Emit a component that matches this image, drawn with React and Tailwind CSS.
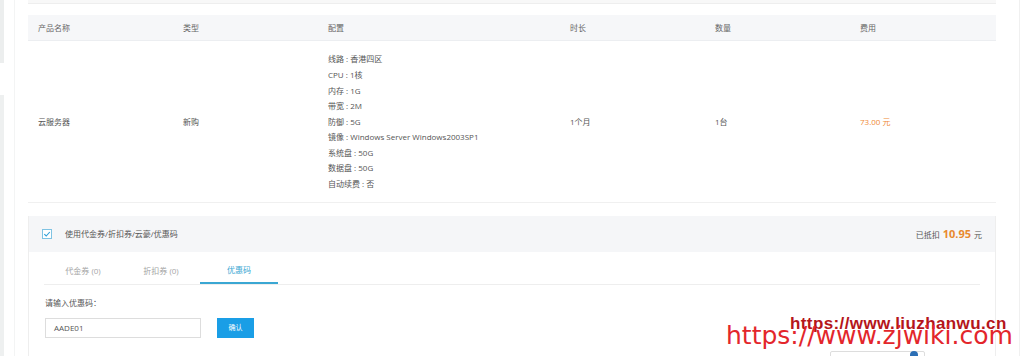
const configLines = [
  "线路 : 香港四区",
  "CPU : 1核",
  "内存 : 1G",
  "带宽 : 2M",
  "防御 : 5G",
  "镜像 : Windows Server Windows2003SP1",
  "系统盘 : 50G",
  "数据盘 : 50G",
  "自动续费 : 否",
];

const cols = "grid grid-cols-[145px_145px_242px_145px_145px_1fr]";

function CheckIcon() {
  return (
    <div className="flex h-[10px] w-[10px] items-center justify-center border border-[#7fc3e3] bg-white">
      <svg width="8" height="8" viewBox="0 0 8 8" fill="none">
        <path d="M1.3 4.2 L3.2 6 L6.8 2" stroke="#2b9ed8" strokeWidth="1.1" />
      </svg>
    </div>
  );
}

export default function App() {
  return (
    <div
      className="relative flex h-[356px] w-[1024px] overflow-hidden bg-white text-[8px] text-[#555]"
      style={{ fontFamily: '"Open Sans", "Noto Sans CJK SC", sans-serif' }}
    >
      {/* left edge */}
      <div className="flex w-[28px] shrink-0">
        <div className="flex w-[4px] flex-col bg-white">
          <div className="h-[63px] bg-[#eceeee]" />
          <div className="h-[32px]" />
          <div className="flex-1 bg-[#eef0f0]" />
        </div>
        <div className="ml-[10px] w-px bg-[#f3f4f4]" />
      </div>

      {/* main */}
      <div className="flex w-[968px] shrink-0 flex-col">
        <div className="h-[4px] border-b border-[#eeeeee] bg-[#f8f8f8]" />

        {/* table header */}
        <div className={`${cols} mt-[11px] h-[26px] items-center border-b border-[#eceef1] bg-[#f6f7f9] text-[#666]`}>
          <div className="pl-[10px]">产品名称</div>
          <div className="pl-[10px]">类型</div>
          <div className="pl-[10px]">配置</div>
          <div className="pl-[10px]">时长</div>
          <div className="pl-[10px]">数量</div>
          <div className="pl-[10px]">费用</div>
        </div>

        {/* table body */}
        <div className={`${cols} h-[162px] items-center border-b border-[#f0f0f0]`}>
          <div className="pl-[10px]">云服务器</div>
          <div className="pl-[10px]">新购</div>
          <div className="flex flex-col pl-[10px] leading-[15.6px]">
            {configLines.map((l) => (
              <div key={l} className="whitespace-pre">{l}</div>
            ))}
          </div>
          <div className="pl-[10px]">1个月</div>
          <div className="pl-[10px]">1台</div>
          <div className="pl-[10px] text-[#ef8a37]">73.00 元</div>
        </div>

        {/* coupon section */}
        <div className="mt-[13px] flex flex-1 flex-col border-x border-[#eeeeee]">
          <div className="flex h-[36px] items-center justify-between bg-[#f5f6f8] pl-[13px] pr-[13px]">
            <div className="flex items-center gap-[13px]">
              <CheckIcon />
              <span>使用代金券/折扣券/云豪/优惠码</span>
            </div>
            <div className="flex items-baseline gap-[3px]">
              <span>已抵扣</span>
              <span className="text-[11px] font-bold text-[#e8892f]">10.95</span>
              <span>元</span>
            </div>
          </div>

          <div className="mx-[15px] mt-[6px] flex h-[27px] border-b border-[#eeeeee] text-[#a5a5a5]">
            <div className="flex w-[78px] items-center justify-center">代金券 (0)</div>
            <div className="flex w-[78px] items-center justify-center">折扣券 (0)</div>
            <div className="flex w-[78px] items-center justify-center border-b-2 border-[#3aa7d3] text-[#3aa7d3]">
              优惠码
            </div>
          </div>

          <div className="ml-[16px] mt-[13px] leading-[10px]">请输入优惠码：</div>
          <div className="ml-[16px] mt-[10px] flex items-center">
            <div className="flex h-[20px] w-[156px] items-center border border-[#dddddd] pl-[8px] text-[#555]">
              AADE01
            </div>
            <div className="ml-[16px] flex h-[20px] w-[37px] items-center justify-center bg-[#1a9ee6] text-[7px] text-white">
              确认
            </div>
          </div>
        </div>
      </div>

      {/* right edge */}
      <div className="flex w-[28px] shrink-0 justify-end">
        <div className="mr-[4px] w-px bg-[#f0f0f0]" />
      </div>

      {/* overlay bits */}
      <div className="absolute left-[830px] top-[351px] h-[10px] w-[95px] rounded-[2px] border border-[#dddddd] bg-white">
        <div className="absolute right-[6px] top-[-1px] h-[8px] w-[8px] rounded-full bg-[#2c6fb5]" />
      </div>
      <div
        className="absolute left-[790px] top-[315px] text-[17px] font-bold leading-none tracking-[0.4px] text-[#b5161b]"
        style={{ fontFamily: '"Liberation Sans", sans-serif' }}
      >
        https://www.liuzhanwu.cn
      </div>
      <div
        className="absolute left-[726px] top-[323px] text-[25px] leading-none text-[#e3262b]"
        style={{ fontFamily: '"DejaVu Sans", sans-serif' }}
      >
        https://www.zjwiki.com
      </div>
    </div>
  );
}
